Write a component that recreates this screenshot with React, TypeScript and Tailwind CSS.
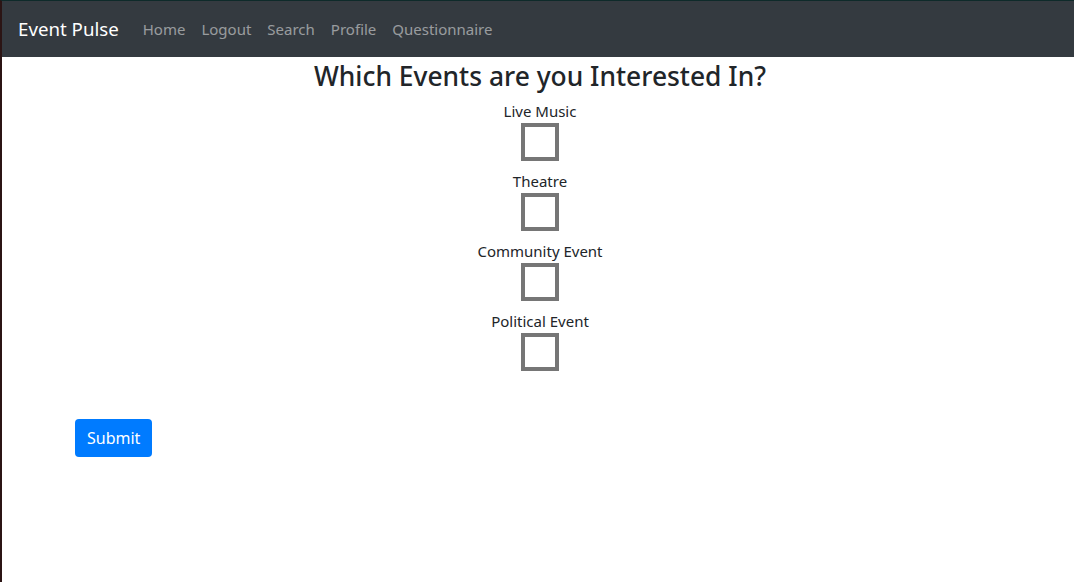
import React from "react";

const links = ["Home", "Logout", "Search", "Profile", "Questionnaire"];
const events = ["Live Music", "Theatre", "Community Event", "Political Event"];

export default function App() {
  return (
    <div
      className="flex min-h-[582px] flex-col border-t border-l-2 border-t-[#0e2a2a] border-l-[#2b1414] bg-white text-[#212529]"
      style={{ fontFamily: '"Segoe UI", "Noto Sans", "Liberation Sans", sans-serif' }}
    >
      {/* Navbar */}
      <nav className="flex h-[56px] items-center bg-[#343a40] px-4">
        <span className="mr-4 text-[18.7px] leading-[30px] text-white">Event Pulse</span>
        <div className="flex">
          {links.map((l) => (
            <a key={l} href="#" className="px-2 text-[15px] leading-6 text-white/50">
              {l}
            </a>
          ))}
        </div>
      </nav>

      {/* Questionnaire */}
      <main className="flex flex-col items-center pl-[4px]">
        <h3 className="mt-[3px] mb-[6px] text-[26.4px] font-medium leading-[33px]">
          Which Events are you Interested In?
        </h3>
        {events.map((e) => (
          <label key={e} className="mb-[8px] flex flex-col items-center">
            <span className="text-[15px] leading-6">{e}</span>
            <span className="block size-[38px] border-4 border-[#767676] bg-white" />
          </label>
        ))}
      </main>

      <div className="mt-[40px] pl-[73px]">
        <button className="rounded bg-[#007bff] px-3 py-[6px] text-[16px] leading-[26px] text-white">
          Submit
        </button>
      </div>
    </div>
  );
}
